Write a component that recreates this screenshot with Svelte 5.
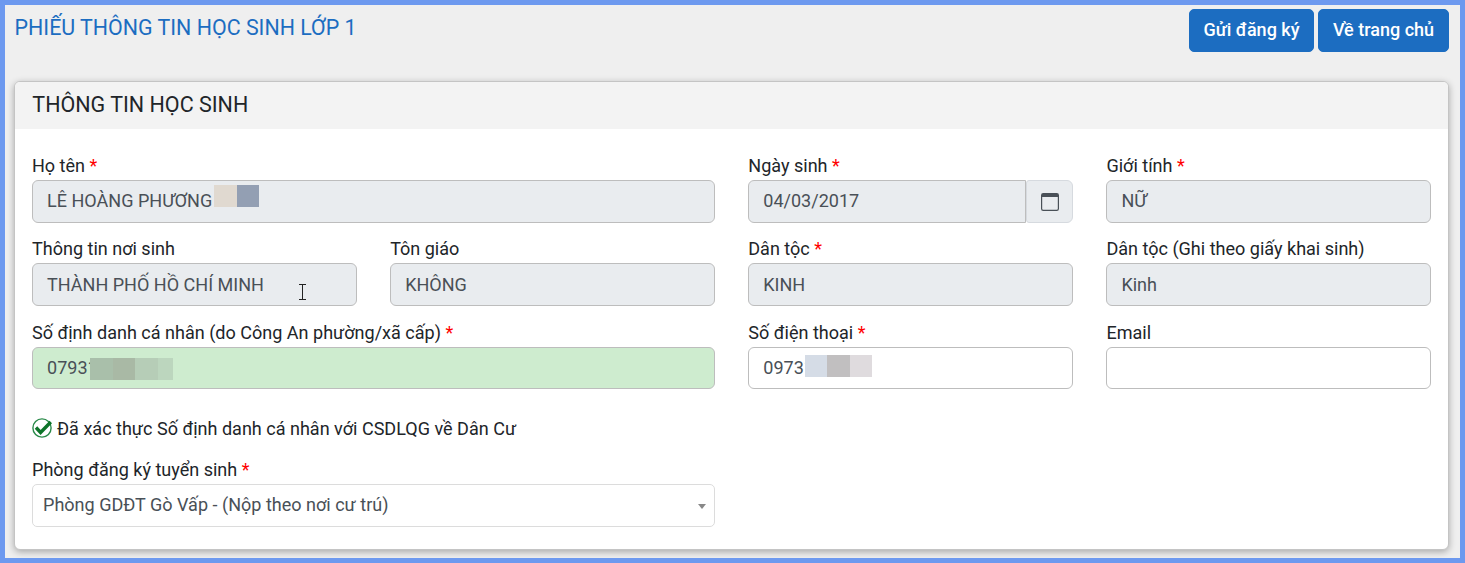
<script>
  // form values as shown on the student sheet
  const idBlur = ['#a9bfaa', '#a9b9a5', '#b6cdb7', '#bcd6be']
  const phoneBlur = ['#d5dce6', '#c1bfc0', '#dfdbde']
  const nameBlur = ['#e0d9d0', '#939fb3']
</script>

<div class="page">
  <div class="top">
    <h1>PHIẾU THÔNG TIN HỌC SINH LỚP 1</h1>
    <div class="actions">
      <button class="send">Gửi đăng ký</button>
      <button class="home">Về trang chủ</button>
    </div>
  </div>

  <section class="card">
    <h2>THÔNG TIN HỌC SINH</h2>
    <div class="body">
      <div class="grid">
        <div class="field wide">
          <span class="label">Họ tên <b>*</b></span>
          <div class="box off">
            LÊ HOÀNG PHƯƠNG
            <span class="blur name">{#each nameBlur as c}<i style="background:{c}"></i>{/each}</span>
          </div>
        </div>
        <div class="field">
          <span class="label">Ngày sinh <b>*</b></span>
          <div class="date">
            <div class="box off">04/03/2017</div>
            <span class="cal">
              <svg width="18" height="18" viewBox="0 0 18 18" fill="none">
                <rect x="0.6" y="0.6" width="16.8" height="16.8" rx="1.6" stroke="#495057" stroke-width="1.2"/>
                <path d="M1 1h16v3H1z" fill="#495057"/>
              </svg>
            </span>
          </div>
        </div>
        <div class="field">
          <span class="label">Giới tính <b>*</b></span>
          <div class="box off">NỮ</div>
        </div>

        <div class="field">
          <span class="label">Thông tin nơi sinh</span>
          <div class="box off mid">
            THÀNH PHỐ HỒ CHÍ MINH
            <svg class="ibeam" width="9" height="16" viewBox="0 0 9 16" fill="none" stroke="#222" stroke-width="1">
              <path d="M1 .5h7M4.5 .5v15M1 15.5h7"/>
            </svg>
          </div>
        </div>
        <div class="field">
          <span class="label">Tôn giáo</span>
          <div class="box off mid">KHÔNG</div>
        </div>
        <div class="field">
          <span class="label">Dân tộc <b>*</b></span>
          <div class="box off mid">KINH</div>
        </div>
        <div class="field">
          <span class="label">Dân tộc (Ghi theo giấy khai sinh)</span>
          <div class="box off mid">Kinh</div>
        </div>

        <div class="field wide">
          <span class="label">Số định danh cá nhân (do Công An phường/xã cấp) <b>*</b></span>
          <div class="box ok short">
            07931
            <span class="blur id">{#each idBlur as c}<i style="background:{c}"></i>{/each}</span>
          </div>
        </div>
        <div class="field">
          <span class="label">Số điện thoại <b>*</b></span>
          <div class="box short">
            09731
            <span class="blur phone">{#each phoneBlur as c}<i style="background:{c}"></i>{/each}</span>
          </div>
        </div>
        <div class="field">
          <span class="label">Email</span>
          <div class="box short"></div>
        </div>
      </div>

      <p class="verified">
        <svg width="20" height="20" viewBox="0 0 20 20" fill="none">
          <circle cx="10" cy="10" r="9.1" fill="#fff" stroke="#2a8a4a" stroke-width="1.4"/>
          <path d="M4 9.5l4.6 5L18.8 4" stroke="#0d7429" stroke-width="3.4"/>
        </svg>
        Đã xác thực Số định danh cá nhân với CSDLQG về Dân Cư
      </p>

      <div class="grid">
        <div class="field wide">
          <span class="label">Phòng đăng ký tuyển sinh <b>*</b></span>
          <div class="select">
            Phòng GDĐT Gò Vấp - (Nộp theo nơi cư trú)
            <span class="caret"></span>
          </div>
        </div>
      </div>
    </div>
  </section>
</div>

<style>
  :global(body) {
    margin: 0;
    font-family: Roboto, "Liberation Sans", sans-serif;
    background: #6d99ef;
  }

  .page {
    box-sizing: border-box;
    height: 553px;
    margin: 5px 5px 0;
    padding: 4px 11px 0 9px;
    background: #efefef;
  }

  .top {
    display: flex;
    justify-content: space-between;
    align-items: flex-start;
    height: 72px;
  }

  h1 {
    margin: 0;
    padding: 6px 0 0 0.6px;
    font-size: 21.4px;
    line-height: 26px;
    font-weight: 400;
    color: #1c6dc1;
  }

  .actions {
    display: flex;
    gap: 4px;
  }

  button {
    height: 43px;
    padding: 0 10px 2px;
    border: 1px solid #1c6dc1;
    border-radius: 5px;
    background: #1c6dc1;
    color: #fff;
    font-family: inherit;
    font-size: 18px;
    font-weight: 500;
  }

  .send {
    width: 125px;
  }

  .home {
    width: 131px;
  }

  .card {
    box-sizing: border-box;
    height: 469px;
    border: 1px solid #c4c4c4;
    border-radius: 6px;
    background: #fff;
    box-shadow: 0 2px 7px rgba(0, 0, 0, 0.3);
    overflow: hidden;
  }

  h2 {
    margin: 0;
    height: 47px;
    padding-left: 17.3px;
    background: #f3f3f3;
    font-size: 21.5px;
    line-height: 46px;
    font-weight: 400;
    color: #212529;
  }

  .body {
    padding: 26px 17px 0;
  }

  .grid {
    display: grid;
    grid-template-columns: repeat(4, 325px);
    grid-template-rows: 83px 84px auto;
    column-gap: 33.15px;
  }

  .field {
    display: flex;
    flex-direction: column;
    min-width: 0;
  }

  .wide {
    grid-column: span 2;
  }

  .label {
    height: 21px;
    margin-bottom: 4px;
    font-size: 18.05px;
    line-height: 22px;
    color: #212529;
  }

  .label b {
    color: #f00;
    font-weight: 400;
  }

  .box {
    position: relative;
    box-sizing: border-box;
    height: 43px;
    padding: 0 14px;
    border: 1px solid #bdbdbd;
    border-radius: 6px;
    background: #fff;
    font-size: 18.05px;
    line-height: 40px;
    color: #495057;
  }

  .mid {
    line-height: 42px;
  }

  .short {
    height: 42px;
  }

  .off {
    background: #e9ecef;
  }

  .ok {
    background: #ceeccf;
  }

  .date {
    display: flex;
  }

  .date .box {
    flex: 1;
    border-radius: 6px 0 0 6px;
  }

  .cal {
    display: flex;
    align-items: center;
    justify-content: center;
    box-sizing: border-box;
    width: 47px;
    height: 43px;
    border: 1px solid #d6dadf;
    border-radius: 3px 6px 6px 3px;
    background: #e9ecef;
  }

  .blur {
    position: absolute;
    display: flex;
    height: 22px;
  }

  .blur i {
    display: block;
    width: 22.5px;
    height: 100%;
  }

  .blur.name {
    left: 181px;
    top: 4px;
  }

  .blur.id {
    left: 57px;
    top: 10px;
  }

  .blur.id i:last-child {
    width: 15.5px;
  }

  .blur.phone {
    left: 55.5px;
    top: 7px;
  }

  .ibeam {
    position: absolute;
    left: 265px;
    top: 20px;
  }

  .verified {
    display: flex;
    align-items: center;
    gap: 5px;
    height: 22px;
    margin: 28px 0 20px;
    font-size: 18.05px;
    color: #212529;
  }

  .select {
    position: relative;
    box-sizing: border-box;
    height: 43px;
    padding-left: 10px;
    border: 1px solid #dcdcdc;
    border-radius: 5px;
    font-size: 18.05px;
    line-height: 40px;
    color: #495057;
  }

  .caret {
    position: absolute;
    right: 8px;
    top: 19px;
    border-style: solid;
    border-width: 5px 4px 0;
    border-color: #888 transparent transparent;
  }
</style>
